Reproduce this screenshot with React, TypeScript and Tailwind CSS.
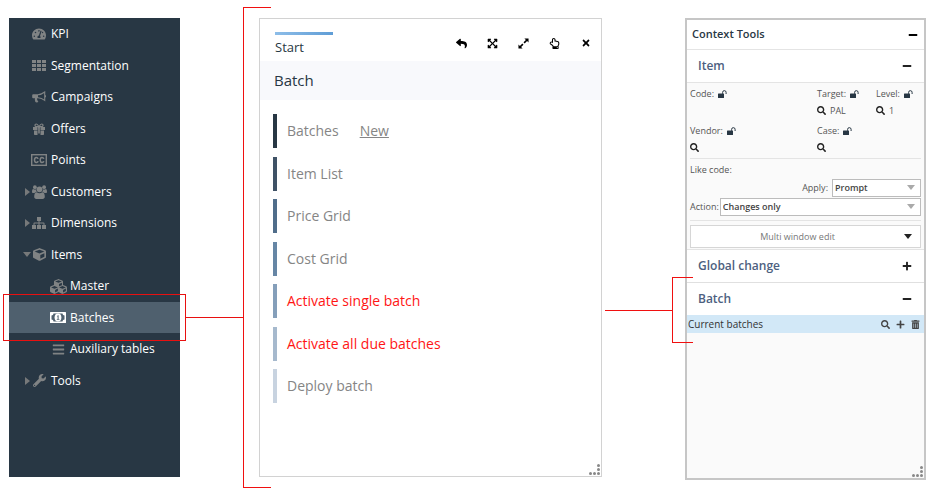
import type { ReactNode } from "react";
import {
  FaBars,
  FaCube,
  FaCubes,
  FaExpandArrowsAlt,
  FaMinus,
  FaPlus,
  FaRegHandPointUp,
  FaReply,
  FaSearch,
  FaTachometerAlt,
  FaTimes,
  FaTrashAlt,
  FaWrench,
} from "react-icons/fa";

const GridIcon = () => (
  <svg viewBox="0 0 14 11" width="14" height="11" fill="currentColor" aria-hidden="true">
    <path d="M0 0h4v3H0zM5 0h4v3H5zM10 0h4v3h-4zM0 4h4v3H0zM5 4h4v3H5zM10 4h4v3h-4zM0 8h4v3H0zM5 8h4v3H5zM10 8h4v3h-4z" />
  </svg>
);

const BullhornIcon = () => (
  <svg viewBox="0 0 14 12" width="14" height="12" aria-hidden="true">
    <path d="M1.200 3.200H6v4H5.300c-.5.600-.2 1.300.2 1.900-.2.500.2 1.100.9 1.600-.6.900-2.300.9-3 .3-.4-1.400-.8-2.500-.4-3.800H1.200A1 1 0 0 1 .2 6.200v-2a1 1 0 0 1 1-1z" fill="currentColor" />
    <path d="M6 3.700C8.500 3.600 10.700 2.600 12.700 1v8.400C10.700 7.800 8.500 6.800 6 6.700" fill="none" stroke="currentColor" strokeWidth="1.100" />
    <path d="M13 4a1.200 1.200 0 0 1 0 2.400z" fill="currentColor" />
  </svg>
);

const GiftIcon = () => (
  <svg viewBox="0 0 12 12" width="12" height="12" aria-hidden="true">
    <path d="M0 4h4.500v3H0zM7.500 4H12v3H7.500zM1 7.600h3.500V12H1.800a.8.8 0 0 1-.8-.8zM7.500 7.600H11v3.600a.8.8 0 0 1-.8.8H7.500zM5.200 4h1.600v6.500H5.200z" fill="currentColor" />
    <path d="M6 3.800C5 2 4.300 1 3.300 1a1.300 1.300 0 0 0 0 2.700H6zm0 0C7 2 7.700 1 8.700 1a1.300 1.300 0 0 1 0 2.700H6z" fill="none" stroke="currentColor" strokeWidth="1.200" />
  </svg>
);

const CaptionIcon = () => (
  <svg viewBox="0 0 16 12" width="16" height="12" fill="none" stroke="currentColor" aria-hidden="true">
    <rect x="0.700" y="0.700" width="14.600" height="10.600" strokeWidth="1.400" />
    <path d="M7 4.800C6.800 3 3.500 2.700 3.500 6S6.800 9 7 7.200M12.700 4.800C12.500 3 9.200 2.700 9.200 6s3.300 3 3.500 1.200" strokeWidth="1.500" />
  </svg>
);

const UsersIcon = () => (
  <svg viewBox="0 0 15 14" width="15" height="14" fill="currentColor" aria-hidden="true">
    <circle cx="2.900" cy="2.200" r="1.900" />
    <circle cx="12.100" cy="2.200" r="1.900" />
    <circle cx="7.500" cy="4.300" r="2.900" />
    <path d="M1.200 4c.9.600 2 .7 2.800.4 0 1.100.3 2 .9 2.700-1 0-1.800.400-2.400 1H1.300C.5 8.100 0 7.600 0 6.900 0 5.500.3 4.200 1.200 4zM13.800 4c-.9.600-2 .7-2.800.4 0 1.100-.3 2-.9 2.700 1 0 1.800.4 2.400 1h1.200c.8 0 1.300-.5 1.300-1.200 0-1.400-.3-2.700-1.200-2.900zM4.700 7.300c1.700 1.200 3.900 1.200 5.600 0 1.800.1 2.500 2 2.500 4.400 0 1.400-.9 2.200-2.100 2.200H4.300c-1.200 0-2.100-.8-2.100-2.200 0-2.400.7-4.300 2.500-4.400z" />
  </svg>
);

const SitemapIcon = () => (
  <svg viewBox="0 0 14 12" width="14" height="12" fill="currentColor" aria-hidden="true">
    <path d="M5 0h4v4H7.500v1.500h4.200a.8.8 0 0 1 .8.8V8H14v4h-4V8h1.500V6.500h-4V8H9v4H5V8h1.500V6.500h-4V8H4v4H0V8h1.500V6.300a.8.8 0 0 1 .8-.8h4.200V4H5z" />
  </svg>
);

const MoneyIcon = () => (
  <svg viewBox="0 0 16 11" width="16" height="11" aria-hidden="true">
    <rect width="16" height="11" rx="0.500" fill="#fff" />
    <path d="M3.500 1.500h9a2 2 0 0 0 2 2v4a2 2 0 0 0-2 2h-9a2 2 0 0 0-2-2v-4a2 2 0 0 0 2-2z" fill="#4f606e" />
    <ellipse cx="8" cy="5.500" rx="3.400" ry="4" fill="#fff" />
    <path d="M6.800 4.200 8 3.300h.6v3.600h.8v.8H6.800v-.8h.8V4.400z" fill="#4f606e" />
  </svg>
);

const ExpandIcon = () => (
  <svg viewBox="0 0 12 12" width="11" height="11" fill="currentColor" aria-hidden="true">
    <path d="M7 .5h4.500V5L9.900 3.400 7.300 6 6 4.700l2.600-2.600zM5 11.500H.5V7l1.600 1.600L4.700 6 6 7.300 3.400 9.900z" />
  </svg>
);

const UnlockIcon = () => (
  <svg viewBox="0 0 9 8" width="9" height="8" aria-hidden="true">
    <rect y="3.500" width="6" height="4.500" rx="0.500" fill="#283744" />
    <path d="M4.600 3.800V2.400a1.700 1.700 0 0 1 3.500 0V4" fill="none" stroke="#283744" strokeWidth="1" />
  </svg>
);

const CaretDown = ({ className }: { className: string }) => (
  <svg viewBox="0 0 8 5" width="8" height="5" fill="currentColor" className={className} aria-hidden="true">
    <path d="M0 0h8L4 5z" />
  </svg>
);

const CaretRight = () => (
  <svg viewBox="0 0 5 8" width="5" height="8" fill="currentColor" aria-hidden="true">
    <path d="M0 0v8l5-4z" />
  </svg>
);

const Grip = ({ className }: { className: string }) => (
  <svg viewBox="0 0 12 12" width="12" height="12" fill="#888" className={className} aria-hidden="true">
    <circle cx="9.500" cy="1.500" r="1.500" />
    <circle cx="9.500" cy="5.500" r="1.500" />
    <circle cx="9.500" cy="9.500" r="1.500" />
    <circle cx="5.500" cy="9.500" r="1.500" />
    <circle cx="1.500" cy="9.500" r="1.500" />
  </svg>
);

type NavItem = {
  label: string;
  icon: ReactNode;
  nested?: boolean;
  active?: boolean;
  state?: "open" | "closed";
};

const navItems: NavItem[] = [
  { label: "KPI", icon: <FaTachometerAlt size={14} /> },
  { label: "Segmentation", icon: <GridIcon /> },
  { label: "Campaigns", icon: <BullhornIcon /> },
  { label: "Offers", icon: <GiftIcon /> },
  { label: "Points", icon: <CaptionIcon /> },
  { label: "Customers", icon: <UsersIcon />, state: "closed" },
  { label: "Dimensions", icon: <SitemapIcon />, state: "closed" },
  { label: "Items", icon: <FaCube size={13} />, state: "open" },
  { label: "Master", icon: <FaCubes size={17} className="shrink-0" />, nested: true },
  { label: "Batches", icon: <MoneyIcon />, nested: true, active: true },
  { label: "Auxiliary tables", icon: <FaBars size={13} />, nested: true },
  { label: "Tools", icon: <FaWrench size={13} />, state: "closed" },
];

const Sidebar = () => (
  <nav className="mb-[3px] w-[171px] shrink-0 bg-[#283744] text-xs leading-5 text-white">
    <ul className="grid h-[378px] auto-rows-fr">
      {navItems.map((item) => (
        <li key={item.label} className="relative">
          <a
            href="#"
            className={`flex h-full items-center pt-px ${item.nested ? "pl-[33px]" : "pl-[14px]"} ${
              item.active ? "bg-[#4f606e]" : ""
            }`}
          >
            <span className="flex w-2 justify-center text-[#77797a]">
              {item.state === "closed" && <CaretRight />}
              {item.state === "open" && <CaretDown className="shrink-0" />}
            </span>
            <span className="mr-1 flex w-4 justify-center text-[#808384]">
              {item.icon}
            </span>
            {item.label}
          </a>
          {item.active && (
            <span className="pointer-events-none absolute -inset-x-1.5 -inset-y-2 z-10 border border-[#e81010]">
              <span className="absolute top-1/2 left-full w-[58px] border-t border-[#e81010]" />
            </span>
          )}
        </li>
      ))}
    </ul>
  </nav>
);

const batchLinks = [
  { label: "Batches", bar: "bg-[#283744]", text: "text-[#858585]", extra: "New" },
  { label: "Item List", bar: "bg-[#3f5266]", text: "text-[#858585]" },
  { label: "Price Grid", bar: "bg-[#506d8a]", text: "text-[#858585]" },
  { label: "Cost Grid", bar: "bg-[#6686a5]", text: "text-[#858585]" },
  { label: "Activate single batch", bar: "bg-[#859fba]", text: "text-[#ff1515]" },
  { label: "Activate all due batches", bar: "bg-[#a6b9cd]", text: "text-[#ff1515]" },
  { label: "Deploy batch", bar: "bg-[#c8d3e0]", text: "text-[#858585]" },
];

const windowActions = [
  { label: "Back", icon: <FaReply size={11} /> },
  { label: "Fit", icon: <FaExpandArrowsAlt size={11} /> },
  { label: "Expand", icon: <ExpandIcon /> },
  { label: "Select", icon: <FaRegHandPointUp size={11} /> },
  { label: "Close", icon: <FaTimes size={10} /> },
];

const BatchWindow = () => (
  <main className="relative mb-[3px] ml-[79px] min-w-0 flex-1 border border-[#d2d2d2] bg-white">
    <span className="pointer-events-none absolute -inset-y-3 -left-[17px] w-7 border-y border-l border-[#f01010]" />
    <header className="flex h-[42px] items-start justify-between pl-[15px]">
      <h1 className="mt-[13px] w-[58px] text-[13px] leading-5 text-[#283744]">
        <span className="block h-[3px] bg-linear-to-r from-[#8dbde8] to-[#5f9dd6]" />
        <span className="mt-0.5 block">Start</span>
      </h1>
      <div className="flex pt-4 text-black">
        {windowActions.map((action) => (
          <button key={action.label} aria-label={action.label} className="flex h-4 w-[31px] items-center justify-center">
            {action.icon}
          </button>
        ))}
      </div>
    </header>
    <h2 className="h-[39px] bg-[#f8f9fc] pl-[14px] text-[15px] leading-[39px] text-[#283744]">Batch</h2>
    <ul className="mt-[14px] flex h-[289px] flex-col justify-between pl-[13px] text-sm">
      {batchLinks.map((link) => (
        <li key={link.label} className={`flex h-[34px] items-center ${link.text}`}>
          <span className={`mr-2.5 h-full w-1 ${link.bar}`} />
          <a href="#">{link.label}</a>
          {link.extra && (
            <a href="#" className="ml-[21px] underline">
              {link.extra}
            </a>
          )}
        </li>
      ))}
    </ul>
    <Grip className="absolute right-0 bottom-0" />
  </main>
);

const Field = ({ label, value, search = true }: { label: string; value?: string; search?: boolean }) => (
  <div className="leading-[17px]">
    <div className="flex items-center gap-1">
      {label}
      <UnlockIcon />
    </div>
    <div className="flex h-[17px] items-center gap-1">
      {search && (
        <button aria-label={`Search ${label}`} className="text-[#222]">
          <FaSearch size={9} />
        </button>
      )}
      {value}
    </div>
  </div>
);

const SelectBox = ({ id, value, className }: { id: string; value: string; className: string }) => (
  <div className={`relative ${className}`}>
    <select
      id={id}
      className="block h-[18px] w-full appearance-none border border-[#bcbcbc] bg-white pl-0.5 text-[9px] leading-4 font-semibold text-[#444]"
    >
      <option>{value}</option>
    </select>
    <CaretDown className="pointer-events-none absolute top-1.5 right-1.5 text-[#aaa]" />
  </div>
);

const SectionHeader = ({ title, open }: { title: string; open: boolean }) => (
  <h3 className="h-8 text-xs font-semibold text-[#4d5f80]">
    <button className="flex h-full w-full items-center justify-between pr-3 pl-[11px]">
      {title}
      {open ? <FaMinus size={10} className="text-[#222]" /> : <FaPlus size={10} className="text-[#222]" />}
    </button>
  </h3>
);

const ContextTools = () => (
  <aside className="relative ml-[83px] flex w-[241px] shrink-0 flex-col border-2 border-[#c6c6c6] bg-white text-[9px] text-[#555]">
    <h2 className="flex h-[30px] items-center justify-between border-b border-[#e4e4e4] pr-1.5 pl-[5px] text-[11px] font-semibold text-[#283744]">
      Context Tools
      <button aria-label="Collapse" className="text-black">
        <FaMinus size={10} />
      </button>
    </h2>
    <section>
      <SectionHeader title="Item" open />
      <div className="border-y border-[#e4e4e4] bg-[#fafafa] px-[3px] pt-0.5 pb-px">
        <div className="grid grid-cols-[127px_59px_1fr] gap-y-[3px]">
          <Field label="Code:" search={false} />
          <Field label="Target:" value="PAL" />
          <Field label="Level:" value="1" />
          <Field label="Vendor:" />
          <Field label="Case:" />
        </div>
        <div className="mt-0.5 border-y border-[#e4e4e4] pt-0.5 pb-1">
          <p className="leading-[18px]">Like code:</p>
          <div className="flex items-center justify-end gap-1">
            <label htmlFor="apply">Apply:</label>
            <SelectBox id="apply" value="Prompt" className="w-[89px]" />
          </div>
          <div className="mt-px flex items-center gap-px">
            <label htmlFor="action">Action:</label>
            <SelectBox id="action" value="Changes only" className="flex-1" />
          </div>
        </div>
        <button className="mt-1 flex h-[23px] w-full items-center border border-[#d6d6d6] bg-white pr-2 text-[#777]">
          <span className="flex-1">Multi window edit</span>
          <CaretDown className="text-[#222]" />
        </button>
      </div>
    </section>
    <section>
      <SectionHeader title="Global change" open={false} />
    </section>
    <section className="relative border-t border-[#e0e0e0]">
      <SectionHeader title="Batch" open />
      <div className="flex h-[18px] items-center justify-between bg-[#d2e8f7] pr-1 pl-px text-[#333]">
        <span className="text-[10px]">Current batches</span>
        <div className="flex gap-1.5 text-[#444]">
          <button aria-label="Search batches">
            <FaSearch size={9} />
          </button>
          <button aria-label="Add batch">
            <FaPlus size={9} />
          </button>
          <button aria-label="Delete batch">
            <FaTrashAlt size={9} />
          </button>
        </div>
      </div>
      <span className="pointer-events-none absolute -top-1.5 -bottom-2.5 -left-[15px] w-[21px] border-y border-l border-[#f01010]">
        <span className="absolute top-1/2 right-full w-[68px] border-t border-[#f01010]" />
      </span>
    </section>
    <div className="flex-1 bg-[#fafafa]" />
    <Grip className="absolute right-0 bottom-0" />
  </aside>
);

export default function App() {
  return (
    <div className="flex min-h-screen bg-white px-[9px] py-[18px] font-['Open_Sans',sans-serif]">
      <Sidebar />
      <BatchWindow />
      <ContextTools />
    </div>
  );
}
